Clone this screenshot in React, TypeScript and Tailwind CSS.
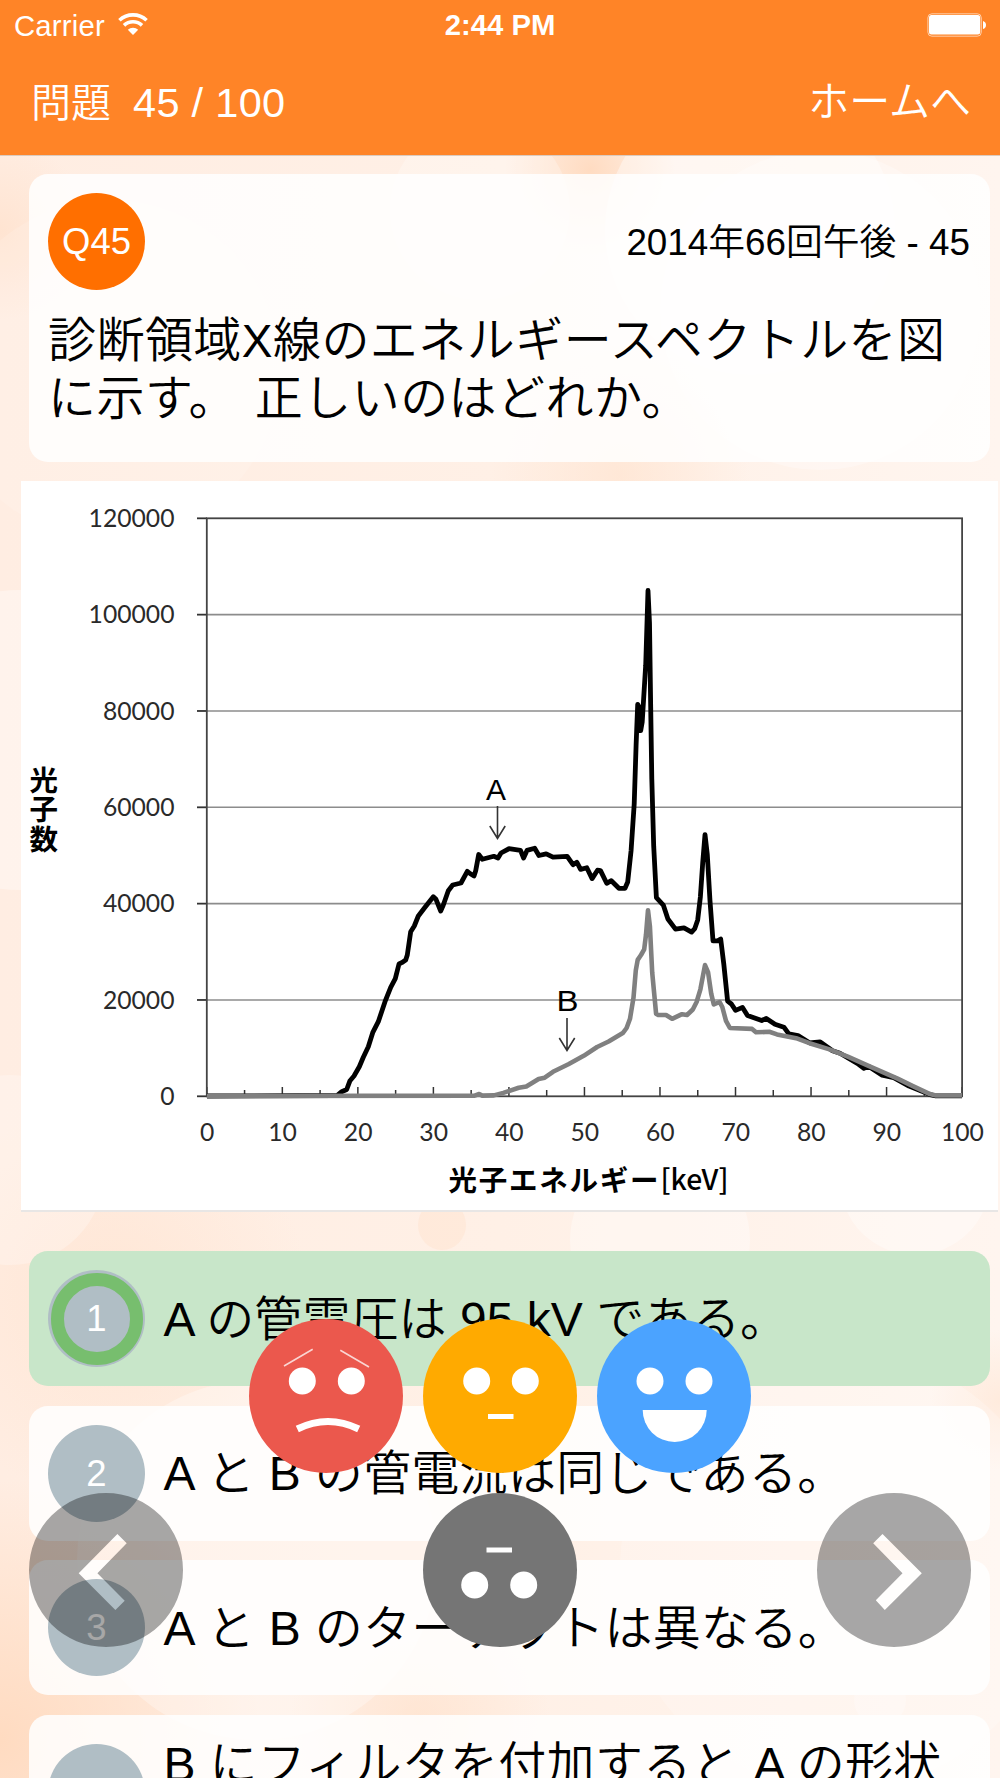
import type { ReactNode } from 'react';
import { clsx } from 'clsx';

interface Answer {
  no: number;
  text: string;
  correct?: boolean;
  tall?: boolean;
}

const ANSWERS: Answer[] = [
  { no: 1, text: 'A の管電圧は 95 kV である。', correct: true },
  { no: 2, text: 'A と B の管電流は同じである。' },
  { no: 3, text: 'A と B のターゲットは異なる。' },
  { no: 4, text: 'B にフィルタを付加すると A の形状', tall: true },
];

const CURVE_A =
  '207,1096 337,1095.5 341.7,1091.7 346.7,1089.5 350,1080.7 354,1076 359.3,1066.7 363.3,1057.3 368.3,1046.7 372.7,1032.7 378.3,1021.7 385,1001.7 390.7,987.3 395.3,978.7 399,964 401.7,962.7 405.7,960 407.3,955 410.7,931.7 414.3,926 418.3,916 425,907.3 433.3,896.7 436,899.3 440.7,911 443.3,905 448.3,890.7 452.7,885 461,883 467.3,871.3 470,873.5 474,876 475.7,870.7 478.7,854.5 482.3,859.3 493.8,856.3 498,858 501,853 509,848.7 520.5,850.4 523.6,858 527,850.4 534.7,848.3 538.9,855.5 546.2,853.8 553,857.2 567.2,856.3 573,864.7 576.8,862.2 580.6,869.4 586.8,867.7 592.1,878.6 597.5,870.2 600.5,870.6 606.7,883.3 611.3,880.7 618.9,888.3 625,888.3 627.7,882 631.1,850.4 634.2,804.1 636.1,745.2 637.7,704.4 638.8,706.5 640.7,730.5 642.2,722 645.7,665.2 648,590.5 649.5,623 650.7,707.3 651.8,778.9 653.7,846.2 656.4,897.6 663.3,905.1 667.9,919 675.5,929.1 684,927.9 691.6,932.1 694.7,928.7 697.7,919.9 700.4,896.7 702.7,863 705,834.6 707.3,854.6 710,900.9 713,940.9 717.6,940.9 720.7,939 723.8,964.1 727.6,1001.1 731.4,1004 735.6,1010.4 742.5,1007.4 747.5,1015.4 761.7,1020.5 766.3,1018.4 775,1024.3 783.9,1027.2 788.8,1033.9 798,1035.6 809.5,1042.8 820.2,1041.9 832.5,1050.8 840,1053.3 857.3,1063.4 863.9,1068.4 868.8,1066.4 882.2,1075.2 893.7,1077.7 909,1086.1 930,1094.6 935.8,1095.8 962,1095.8';

const CURVE_B =
  '207,1096 474.6,1095.6 479.2,1094 482.3,1095.6 493.8,1095.4 503.3,1092.9 518.7,1087.8 526.3,1086.5 538.6,1079 544.7,1077.7 553,1071.8 568.4,1064.2 583.7,1055.8 597.1,1047 608.6,1041.5 622.8,1033.1 626.6,1028 630,1018.8 633.5,997.7 635.8,970.4 637.7,959.9 641,955 644.2,949.3 646,934.6 648,910.3 649.9,926.2 652.2,972.5 656.1,1013.7 658.3,1015 666,1015 672.1,1018.8 682,1014.2 687,1015 692.8,1009.5 696.6,1002 700.4,989.3 705,965.1 708.1,972.5 711.2,993.6 713.8,1004.5 719.6,1002 722.3,1007 726,1020.9 729.9,1028 752.1,1028.9 756,1032.3 769.3,1031.8 777,1034.4 796.1,1038.2 809.5,1043.2 828.7,1049.1 847.8,1056.7 870.8,1066.8 897.6,1078.6 912.9,1086.1 930,1094.1 935.8,1095.4 962,1095.4';

const X_TICKS = [0, 10, 20, 30, 40, 50, 60, 70, 80, 90, 100];
const Y_TICKS = [0, 20000, 40000, 60000, 80000, 100000, 120000];

const toX = (keV: number) => 206.8 + keV * 7.553;
const toY = (count: number) => 1096.3 - (count / 20000) * 96.33;

function Bokeh() {
  return (
    <svg className="absolute inset-0 -z-10" width="1000" height="1778" viewBox="0 0 1000 1778" aria-hidden="true">
      <defs>
        <linearGradient id="base" x1="0" y1="0" x2="1" y2="0">
          <stop offset="0" stopColor="#ffede2" />
          <stop offset="0.5" stopColor="#fff0e6" />
          <stop offset="1" stopColor="#fff5ef" />
        </linearGradient>
        <radialGradient id="peach">
          <stop offset="0" stopColor="#ffd9bd" stopOpacity="0.9" />
          <stop offset="1" stopColor="#ffd9bd" stopOpacity="0" />
        </radialGradient>
      </defs>
      <rect width="1000" height="1778" fill="url(#base)" />
      <circle cx="0" cy="230" r="90" fill="url(#peach)" opacity="0.5" />
      <circle cx="590" cy="170" r="85" fill="url(#peach)" />
      <circle cx="620" cy="475" r="130" fill="url(#peach)" opacity="0.45" />
      <circle cx="0" cy="1740" r="260" fill="url(#peach)" />
      <circle cx="420" cy="1720" r="130" fill="url(#peach)" opacity="0.5" />
      <circle cx="110" cy="1300" r="200" fill="url(#peach)" opacity="0.4" />
      <circle cx="1000" cy="1400" r="70" fill="url(#peach)" opacity="0.4" />
      <circle cx="480" cy="210" r="90" fill="#fff" opacity="0.25" />
      <circle cx="750" cy="230" r="145" fill="#fff" opacity="0.4" />
      <circle cx="820" cy="310" r="160" fill="#fff" opacity="0.3" />
      <circle cx="110" cy="370" r="170" fill="#fff" opacity="0.12" />
      <circle cx="20" cy="740" r="150" fill="#fff" opacity="0.35" />
      <circle cx="10" cy="1170" r="95" fill="#fff" opacity="0.25" />
      <circle cx="660" cy="1240" r="90" fill="#fff" opacity="0.35" />
      <circle cx="915" cy="1180" r="75" fill="#fff" opacity="0.35" />
      <circle cx="257" cy="1560" r="180" fill="#fff" opacity="0.3" />
      <circle cx="840" cy="1570" r="220" fill="#fff" opacity="0.2" />
      <circle cx="880" cy="1700" r="26" fill="#fff" opacity="0.25" />
      <ellipse cx="442" cy="1225" rx="24" ry="25" fill="#ffe3d0" opacity="0.5" />
    </svg>
  );
}

function StatusBar() {
  return (
    <div className="flex h-12 items-center pt-[3px] pr-[14px] pl-[14px] text-[29.3px] leading-none">
      <div className="flex flex-1 items-center gap-[13px]">
        <span className="tracking-[0.2px]">Carrier</span>
        <svg width="30" height="22" viewBox="0 0 30 22" className="-mt-[3px]" fill="none" stroke="#fff" strokeWidth="3.6">
          <path d="M1.4 7.2 A20 20 0 0 1 28.6 7.2" />
          <path d="M6 12.4 A13 13 0 0 1 24 12.4" />
          <path d="M15 22 L9.8 16.8 A7.4 7.4 0 0 1 20.2 16.8 Z" fill="#fff" stroke="none" />
        </svg>
      </div>
      <span className="-mt-px font-bold">2:44 PM</span>
      <div className="flex flex-1 justify-end">
        <svg width="60" height="24" viewBox="0 0 60 24" className="-mt-px">
          <rect x="1.9" y="0.8" width="53.4" height="22.4" rx="4" fill="none" stroke="#fff" strokeOpacity="0.6" />
          <rect x="3" y="2" width="51.2" height="19.4" rx="2.5" fill="#fff" />
          <path d="M57 8 Q60 9 60 12 Q60 15 57 16 Z" fill="#fff" />
        </svg>
      </div>
    </div>
  );
}

function Header() {
  return (
    <header className="h-[156px] border-b border-[#dccabd] bg-[#ff8427] text-white">
      <StatusBar />
      <div className="flex h-[108px] items-center justify-between pt-0.5 pr-[29px] pl-[31px] font-[350]">
        <span className="flex items-baseline gap-[22px] text-[40px]">
          問題 <span className="text-[41.5px] tracking-[0.3px]">45 / 100</span>
        </span>
        <button type="button" className="text-[41px]">
          ホームへ
        </button>
      </div>
    </header>
  );
}

function QuestionCard() {
  return (
    <section className="mr-2.5 ml-[29px] h-[288px] rounded-[19px] bg-white/85 px-[19px] pt-[19px]">
      <div className="flex items-center justify-between">
        <div className="flex size-[97px] items-center justify-center rounded-full bg-[#ff6f00] pt-0.5 text-[36.5px] text-white">
          Q45
        </div>
        <span className="pt-0.5 pr-px text-[36.8px] font-[350]">2014年66回午後 - 45</span>
      </div>
      <p className="mt-[22px] text-[48px] leading-[57px] font-[350] tracking-[0.45px] whitespace-nowrap">
        診断領域<span className="text-[46px]">X</span>線のエネルギースペクトルを図
        <br />
        <span className="mr-1">に示す。</span> 正しいのはどれか。
      </p>
    </section>
  );
}

function SpectrumChart() {
  return (
    <svg
      className="mt-[19px] ml-[21px] block border-b-2 border-[#e8e6e5] bg-white"
      width="977"
      height="731"
      viewBox="21 481 977 729"
      fill="none"
    >
      {Y_TICKS.map((t) => (
        <g key={t}>
          {t > 0 && t < 120000 && <path d={`M207 ${toY(t)}H962`} stroke="#8c8c8c" strokeWidth="1.6" />}
          <path d={`M197 ${toY(t)}H207`} stroke="#333" strokeWidth="1.8" />
          <text x="174.5" y={toY(t) + 8.6} textAnchor="end" fontSize="24.7" fill="#2a2a2a" className="font-[Lato]">
            {t}
          </text>
        </g>
      ))}
      {X_TICKS.map((t) => (
        <g key={t}>
          <path d={`M${toX(t)} 1096V1087`} stroke="#333" strokeWidth="1.5" />
          {t < 100 && <path d={`M${toX(t + 5)} 1096V1090`} stroke="#333" strokeWidth="1.5" />}
          <text x={toX(t) + 0.3} y="1141" textAnchor="middle" fontSize="24.7" fill="#2a2a2a" className="font-[Lato]">
            {t}
          </text>
        </g>
      ))}
      <rect x="206.8" y="518.3" width="755.3" height="578" stroke="#444" strokeWidth="1.8" />
      <polyline points={CURVE_A} stroke="#000" strokeWidth="4.8" strokeLinejoin="round" />
      <polyline points={CURVE_B} stroke="#808080" strokeWidth="4.6" strokeLinejoin="round" />
      <g fill="#000" fontSize="29">
        <text x="486" y="799.5" textLength="20" lengthAdjust="spacingAndGlyphs">
          A
        </text>
        <text x="556.5" y="1010.5" textLength="22" lengthAdjust="spacingAndGlyphs">
          B
        </text>
      </g>
      <g stroke="#333" strokeWidth="1.6">
        <path d="M497.5 806V838M489.8 826L497.5 838.5L505.2 826" />
        <path d="M567 1018V1050M559.3 1038L567 1050.5L574.7 1038" />
      </g>
      <g fill="#000" fontSize="28.5">
        <g fontWeight="600" textAnchor="middle">
          <text x="43.8" y="790.5">光</text>
          <text x="43.8" y="820">子</text>
          <text x="43.8" y="849.5">数</text>
        </g>
        <text x="448.5" y="1190.5" textLength="210" fontWeight="600">
          光子エネルギー
        </text>
        <text
          x="660.5"
          y="1190"
          textLength="68"
          lengthAdjust="spacingAndGlyphs"
          fontWeight="500"
          className="font-['Noto_Sans_CJK_JP']"
        >
          [keV]
        </text>
      </g>
    </svg>
  );
}

function AnswerCard({ no, text, correct, tall }: Answer) {
  return (
    <li
      className={clsx(
        'flex items-center gap-[18.5px] rounded-[19px] px-[19px] py-[19px]',
        correct ? 'bg-[#c8e6c9]' : 'bg-white/85'
      )}
    >
      <div className="flex size-[97px] shrink-0 items-center justify-center rounded-full bg-[#b0bec5] text-[36.5px] text-white">
        {correct ? (
          <div className="flex size-[92px] items-center justify-center rounded-full border-[13px] border-[#77be6e] pt-0.5">
            {no}
          </div>
        ) : (
          <span className="pt-0.5">{no}</span>
        )}
      </div>
      <p
        className={clsx(
          'pt-0.5 text-[48px] leading-[58px] font-[350] whitespace-nowrap',
          correct ? 'tracking-[0.05px]' : 'tracking-[0.3px]',
          tall && 'h-[118px]'
        )}
      >
        {text}
      </p>
    </li>
  );
}

function Face({ color, children }: { color: string; children: ReactNode }) {
  return (
    <svg width="154" height="154" viewBox="-77 -77 154 154" fill="#fff">
      <circle r="77" fill={color} />
      {children}
    </svg>
  );
}

function NavButton({ label, hole }: { label: string; hole: string }) {
  return (
    <button type="button" aria-label={label}>
      <svg width="154" height="154" viewBox="-77 -77 154 154">
        <path d={`M-77 0A77 77 0 1 1 77 0A77 77 0 1 1 -77 0Z${hole}`} fillRule="evenodd" fillOpacity="0.345" />
      </svg>
    </button>
  );
}

function Controls() {
  return (
    <div className="absolute top-[1319px] right-[29px] left-[29px] flex flex-col gap-5">
      <div className="flex justify-center gap-5">
        <Face color="#eb584d">
          <circle cx="-23.7" cy="-15" r="13.5" />
          <circle cx="25.3" cy="-15" r="13.5" />
          <path d="M-42 -30L-13.3 -46.7M14.3 -45.7L43 -29" stroke="#fff" strokeOpacity="0.75" strokeWidth="1.6" />
          <path d="M-28.7 33Q2 18 32.7 33" fill="none" stroke="#fff" strokeWidth="7" />
        </Face>
        <Face color="#ffaa00">
          <circle cx="-23.3" cy="-15" r="13.5" />
          <circle cx="25.3" cy="-15" r="13.5" />
          <rect x="-12" y="18" width="25.5" height="5" />
        </Face>
        <Face color="#4ba3ff">
          <circle cx="-24" cy="-15" r="13.5" />
          <circle cx="25" cy="-15" r="13.5" />
          <path d="M-31.3 14H32.7A32 32 0 0 1 -31.3 14Z" />
        </Face>
      </div>
      <div className="flex justify-between">
        <NavButton label="前へ" hole="M11.4 -36L20.7 -26.7L-8.6 3.3L18.7 30.7L9.4 40L-27.3 3.3Z" />
        <Face color="#757575">
          <circle cx="-25.3" cy="15" r="13.5" />
          <circle cx="23.7" cy="15" r="13.5" />
          <rect x="-13.5" y="-22.5" width="25.5" height="5" />
        </Face>
        <NavButton label="次へ" hole="M-11.5 -36L-20.8 -26.7L8.5 3.3L-18.2 30.3L-9.2 40L27.8 3.3Z" />
      </div>
    </div>
  );
}

export default function App() {
  return (
    <div className="relative isolate h-[1778px] w-[1000px] overflow-hidden font-['Liberation_Sans','Noto_Sans_CJK_JP',sans-serif] text-black">
      <Bokeh />
      <Header />
      <main className="pt-[18px]">
        <QuestionCard />
        <SpectrumChart />
        <ul className="mt-[39px] mr-2.5 ml-[29px] flex flex-col gap-[19.5px]">
          {ANSWERS.map((a) => (
            <AnswerCard key={a.no} {...a} />
          ))}
        </ul>
      </main>
      <Controls />
    </div>
  );
}
